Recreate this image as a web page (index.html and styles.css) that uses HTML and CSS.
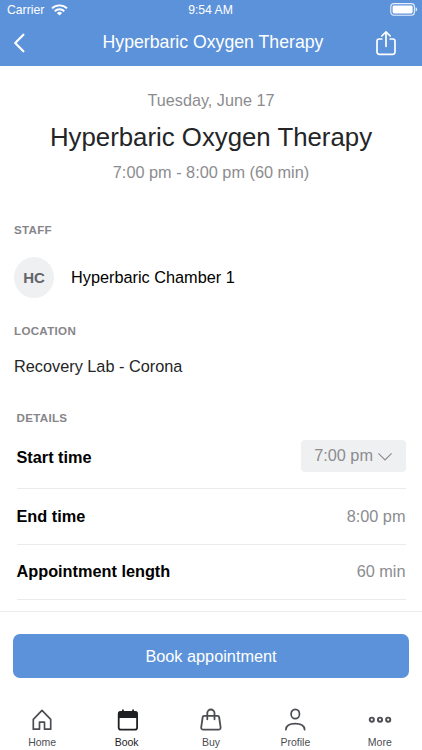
FILE: index.html
```html
<!DOCTYPE html>
<html lang="en">
<head>
  <meta charset="UTF-8">
  <meta name="viewport" content="width=device-width, initial-scale=1.0">
  <title>Hyperbaric Oxygen Therapy</title>
  <link rel="stylesheet" href="styles.css">
</head>
<body>
  <div class="app">
    <!-- Header -->
    <header class="header">
      <div class="status-bar">
        <div class="carrier">
          <span>Carrier</span>
          <svg width="17" height="12" viewBox="0 0 17 12" fill="none" stroke="#fff" stroke-width="1.9">
            <path d="M1 4.4a10.8 10.8 0 0 1 15 0M3.7 7.2a6.9 6.9 0 0 1 9.6 0"/>
            <path d="M8.5 11.6L5.9 9a3.8 3.8 0 0 1 5.2 0z" fill="#fff" stroke="none"/>
          </svg>
        </div>
        <span class="clock">9:54 AM</span>
        <svg class="battery" width="28" height="13" viewBox="0 0 28 13">
          <rect x=".8" y=".6" width="23.6" height="11.6" rx="3" fill="none" stroke="#fff" stroke-opacity=".85" stroke-width="1.1"/>
          <rect x="2.6" y="2.4" width="20" height="8" rx="1.4" fill="#fff"/>
          <path d="M25.6 4.2c2 .7 2 3.7 0 4.4z" fill="#fff" fill-opacity=".85"/>
        </svg>
      </div>
      <div class="nav-bar">
        <svg width="12" height="20" viewBox="0 0 12 20" fill="none" stroke="#fff" stroke-width="2.2" stroke-linecap="round" stroke-linejoin="round">
          <path d="M10.4 1.7L2.2 10l8.2 8.3"/>
        </svg>
        <h1>Hyperbaric Oxygen Therapy</h1>
        <svg width="22" height="26" viewBox="0 0 22 26" fill="none" stroke="#fff" stroke-width="1.7" stroke-linecap="round" stroke-linejoin="round">
          <path d="M6.800 9H4.200a2.200 2.200 0 0 0-2.200 2.200v10.900a2.200 2.200 0 0 0 2.200 2.200h13.600a2.200 2.200 0 0 0 2.200-2.200V11.200A2.200 2.200 0 0 0 17.800 9h-2.600M11 16.300V2M6.800 6L11 1.900 15.200 6"/>
        </svg>
      </div>
    </header>

    <!-- Appointment -->
    <main class="content">
      <section class="summary">
        <p class="date">Tuesday, June 17</p>
        <h2>Hyperbaric Oxygen Therapy</h2>
        <p class="time">7:00 pm - 8:00 pm (60 min)</p>
      </section>

      <section class="staff">
        <h3>STAFF</h3>
        <div class="staff-member">
          <span class="avatar">HC</span>
          <span>Hyperbaric Chamber 1</span>
        </div>
      </section>

      <section class="location">
        <h3>LOCATION</h3>
        <p>Recovery Lab - Corona</p>
      </section>

      <section class="details">
        <h3>DETAILS</h3>
        <div class="row row-start">
          <span class="label">Start time</span>
          <button class="time-select">
            <span>7:00 pm</span>
            <svg width="14" height="9" viewBox="0 0 14 9" fill="none" stroke="#8c8c8f" stroke-width="1.2">
              <path d="M.4 1.3L7 8 13.600 1.300"/>
            </svg>
          </button>
        </div>
        <div class="row">
          <span class="label">End time</span>
          <span class="value">8:00 pm</span>
        </div>
        <div class="row">
          <span class="label">Appointment length</span>
          <span class="value">60 min</span>
        </div>
      </section>
    </main>

    <!-- Book button -->
    <div class="action-bar">
      <button class="book-button">Book appointment</button>
    </div>

    <!-- Tabs -->
    <nav class="tabs">
      <a class="tab">
        <svg width="24" height="24" viewBox="0 0 24 24" fill="none" stroke="#4b4d53" stroke-width="1.7" stroke-linejoin="round">
          <path d="M12 2.300L3.300 11.300v9.900h6.200v-7h5v7h6.200v-9.900z"/>
        </svg>
        <span>Home</span>
      </a>
      <a class="tab active">
        <svg width="24" height="24" viewBox="0 0 24 24" fill="none" stroke="#1f2024" stroke-width="1.8">
          <rect x="3.700" y="4" width="18.400" height="17.600" rx="2.200"/>
          <path d="M3.200 10V5.300a2 2 0 0 1 2-2h15.400a2 2 0 0 1 2 2V10z" fill="#1f2024" stroke="none"/>
          <path d="M7.900 1.500v3M18.100 1.500v3"/>
        </svg>
        <span>Book</span>
      </a>
      <a class="tab">
        <svg width="24" height="24" viewBox="0 0 24 24" fill="none" stroke="#4b4d53" stroke-width="1.8" stroke-linejoin="round" stroke-linecap="round">
          <path d="M5.200 7.800h13.400a1.500 1.500 0 0 1 1.500 1.200l1.500 10.400a2 2 0 0 1-2 2.300H4.200a2 2 0 0 1-2-2.300L3.700 9a1.500 1.500 0 0 1 1.500-1.200zM8.300 11.300V5.100a3.600 3.600 0 0 1 7.200 0v6.200"/>
        </svg>
        <span>Buy</span>
      </a>
      <a class="tab">
        <svg width="24" height="24" viewBox="0 0 24 24" fill="none" stroke="#4b4d53" stroke-width="1.700" stroke-linecap="round">
          <ellipse cx="12.300" cy="6" rx="4.200" ry="4.700"/>
          <path d="M2.900 21.700c.2-3.800 3.200-6 9.300-6s9.200 2.200 9.400 6"/>
        </svg>
        <span>Profile</span>
      </a>
      <a class="tab">
        <svg width="24" height="24" viewBox="0 0 24 24" fill="none" stroke="#4b4d53" stroke-width="1.900">
          <circle cx="3.800" cy="11.700" r="2.100"/>
          <circle cx="12" cy="11.700" r="2.100"/>
          <circle cx="20.200" cy="11.700" r="2.100"/>
        </svg>
        <span>More</span>
      </a>
    </nav>
  </div>
</body>
</html>
```
FILE: styles.css
```css
* {
  box-sizing: border-box;
}
body {
  margin: 0;
  background: #fff;
  color: #242527;
  font-family: "Liberation Sans", Arial, sans-serif;
  font-size: 16.3px;
}
h1, h2, h3, p {
  margin: 0;
  font-weight: normal;
}
button {
  border: none;
  padding: 0;
  font: inherit;
}
svg {
  display: block;
}
.app {
  display: flex;
  flex-direction: column;
  height: 750px;
  overflow: hidden;
}
.header {
  height: 66px;
  background: #5c92da;
  color: #fff;
}
.status-bar {
  display: grid;
  grid-template-columns: 1fr auto 1fr;
  align-items: center;
  height: 19px;
  padding: 0 4px 0 7px;
  font-size: 12.2px;
}
.carrier {
  display: flex;
  align-items: center;
  gap: 7px;
}
.clock {
  margin-right: 4px;
}
.battery {
  justify-self: end;
}
.nav-bar {
  display: grid;
  grid-template-columns: 80px 1fr 80px;
  align-items: center;
  height: 47px;
  padding: 0 9px 0 13px;
}
.nav-bar h1 {
  font-size: 17.7px;
  text-align: center;
}
.nav-bar svg:last-child {
  justify-self: end;
  margin-right: 16px;
}
.content {
  flex: none;
  height: 545px;
}
.summary {
  padding-top: 24px;
  text-align: center;
}
.date, .time {
  color: #8c8c8f;
  line-height: 20px;
}
.date {
  font-size: 16.2px;
}
.summary h2 {
  margin: 10px 0 8px;
  font-size: 25.8px;
  line-height: 34px;
}
h3 {
  color: #86868a;
  font-size: 11.6px;
  font-weight: bold;
  letter-spacing: 0.3px;
  line-height: 14px;
}
.staff, .location {
  padding: 0 14px;
}
.staff {
  margin-top: 41px;
}
.staff-member {
  display: flex;
  align-items: center;
  gap: 17px;
  margin-top: 20px;
  color: #000;
}
.avatar {
  width: 40px;
  height: 41px;
  border-radius: 50%;
  background: #eff0f2;
  color: #626469;
  font-size: 15px;
  font-weight: bold;
  line-height: 41px;
  text-align: center;
}
.location {
  margin-top: 26px;
}
.location p {
  margin-top: 18px;
  line-height: 20px;
}
.details {
  margin-top: 35px;
  padding: 0 16px 0 16.5px;
}
.row {
  display: flex;
  align-items: center;
  justify-content: space-between;
  height: 55.5px;
  border-bottom: 1px solid #ebebed;
}
.row-start {
  height: 64px;
}
.row-start .label {
  padding-top: 2px;
}
.label {
  color: #000;
  font-weight: bold;
}
.value {
  padding-right: 0.5px;
  color: #8c8c8f;
}
.time-select {
  display: flex;
  align-items: center;
  gap: 5px;
  height: 32px;
  margin-bottom: 2px;
  padding: 0 14px 0 13px;
  border-radius: 4px;
  background: #eff0f2;
  color: #8c8c8f;
}
.time-select svg {
  margin-top: 2px;
}
.action-bar {
  height: 84px;
  padding: 22px 13px 0;
  border-top: 1px solid #ebebed;
}
.book-button {
  width: 100%;
  height: 44px;
  border-radius: 7px;
  background: #5c92da;
  color: #fff;
}
.tabs {
  display: flex;
  height: 55px;
}
.tab {
  flex: 1;
  display: flex;
  flex-direction: column;
  align-items: center;
  gap: 4px;
  padding-top: 13px;
  color: #4b4d53;
  font-size: 10.5px;
  line-height: 12px;
}
.tab.active {
  color: #1f2024;
}
```
